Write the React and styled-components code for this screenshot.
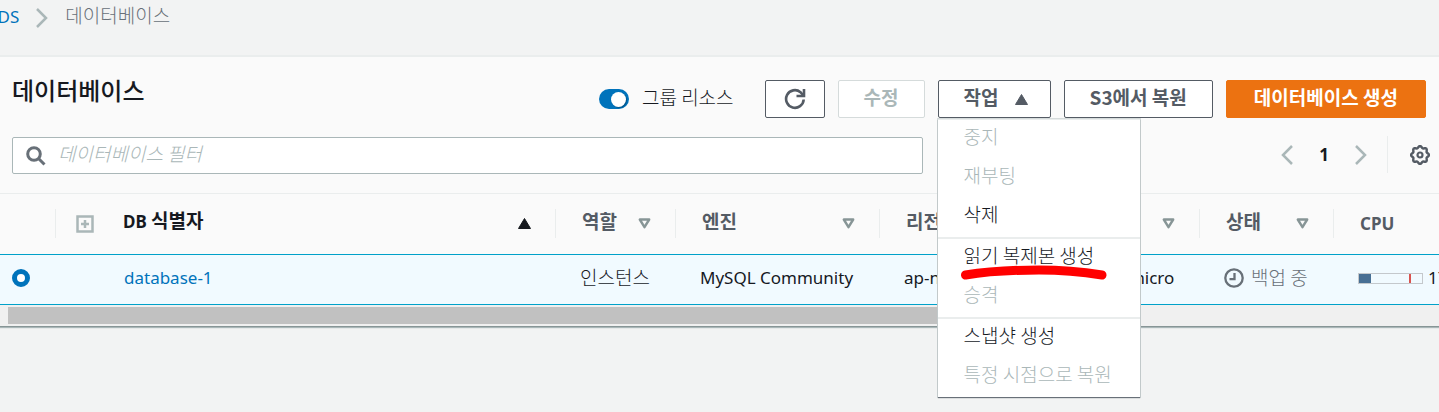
import React from "react";
import styled, { createGlobalStyle, css } from "styled-components";

const latin = '"Noto Sans", "Noto Sans CJK KR", sans-serif';
const korean = '"Noto Sans CJK KR", "Noto Sans", sans-serif';

const GlobalStyle = createGlobalStyle`
  *, *::before, *::after { box-sizing: border-box; }
  body {
    margin: 0;
    min-height: 100vh;
    background: #f2f3f3;
    color: #16191f;
    font: 300 19px/24px ${korean};
  }
  button, input { font: inherit; color: inherit; }
`;

const Breadcrumbs = styled.nav`
  display: flex;
  align-items: flex-start;
  gap: 16px;
  height: 55px;
  margin-left: -13px;
  padding-top: 4px;
  line-height: 22px;
  color: #687078;
`;

const CrumbLink = styled.a`
  font: 400 17px/26px ${latin};
  color: #0073bb;
  text-decoration: none;
`;

const CrumbArrow = styled.svg`
  margin-top: 4px;
`;

const Panel = styled.main`
  background: #fafafa;
  border-top: 2px solid #eaeded;
  border-bottom: 1px solid #879596;
  box-shadow: 0 1px 1px #aab7b8;
`;

const Toolbar = styled.header`
  padding: 23px 13px 19px 12px;
`;

const TitleRow = styled.div`
  display: flex;
  align-items: center;
  gap: 13px;
`;

const Title = styled.h1`
  flex: 1;
  align-self: flex-start;
  margin: 0;
  font-size: 24px;
  line-height: 20px;
  font-weight: 500;
`;

const SwitchLabel = styled.label`
  display: flex;
  align-items: center;
  gap: 13px;
  margin-right: 18px;
`;

const SwitchInput = styled.input`
  appearance: none;
  display: flex;
  justify-content: flex-end;
  width: 30px;
  height: 20px;
  margin: 0;
  padding: 3px;
  border-radius: 10px;
  background: #0073bb;
  &::after {
    content: "";
    width: 15px;
    height: 15px;
    border-radius: 50%;
    background: #fff;
    box-shadow: 1px 1px 1px #00558b;
  }
`;

const SwitchText = styled.span`
  padding-bottom: 4px;
`;

const variants = {
  normal: css`background: #fff; border-color: #545b64; color: #545b64;`,
  disabled: css`background: #fff; border-color: #d5dbdb; color: #aab7b8;`,
  primary: css`background: #ec7211; border-color: #ec7211; color: #fff;`,
};

const Button = styled.button`
  display: flex;
  align-items: center;
  justify-content: center;
  gap: 16px;
  height: 38px;
  padding: 0 ${(p) => p.$pad ?? 25}px 4px;
  border: 1px solid;
  border-radius: 2px;
  font-weight: 700;
  white-space: nowrap;
  ${(p) => variants[p.$variant || "normal"]}
`;

const RefreshButton = styled(Button)`
  width: 60px;
  padding: 0;
`;

const MenuButton = styled(Button)`
  padding-right: 22px;
`;

const MenuAnchor = styled.div`
  position: relative;
`;

const Caret = styled.svg`
  margin-top: 4px;
`;

const Menu = styled.div`
  position: absolute;
  z-index: 2;
  top: 39px;
  left: 0;
  width: 202px;
  background: #fff;
  border-top: 1px solid #eaeded;
  box-shadow: 0 1px 1px #687078, 0 0 0 1px #d5dbdb;
`;

const MenuGroup = styled.div`
  & + & { border-top: 2px solid #eaeded; }
`;

const MenuItem = styled.button`
  display: block;
  width: 100%;
  height: 39px;
  padding: 0 26px 7px;
  border: 0;
  background: none;
  text-align: left;
  white-space: nowrap;
  color: #16191f;
  &:disabled { color: #aab7b8; }
`;

const Underline = styled.svg`
  position: absolute;
  top: 144px;
  left: 20px;
  pointer-events: none;
`;

const FilterRow = styled.div`
  display: flex;
  align-items: flex-start;
  justify-content: space-between;
  margin-top: 19px;
`;

const SearchBox = styled.div`
  display: flex;
  align-items: center;
  gap: 12px;
  width: 64.4%;
  height: 37px;
  padding: 0 13px;
  background: #fff;
  border: 1px solid #aab7b8;
  border-radius: 2px;
`;

const SearchInput = styled.input`
  flex: 1;
  padding: 0 0 6px;
  border: 0;
  outline: 0;
  background: none;
  &::placeholder { color: #aab7b8; font-style: italic; opacity: 1; }
`;

const Pager = styled.div`
  display: flex;
  align-items: center;
  gap: 20px;
  height: 35px;
`;

const IconButton = styled.button`
  display: flex;
  padding: 0;
  border: 0;
  background: none;
`;

const PageNumber = styled.span`
  width: 22px;
  text-align: center;
  font: 700 17px/24px ${latin};
`;

const Settings = styled.div`
  display: flex;
  align-items: center;
  height: 37px;
  margin-right: -4px;
  padding-left: 22px;
  border-left: 1px solid #eaeded;
`;

const TableArea = styled.div`
  overflow: hidden;
  border-top: 1px solid #eaeded;
`;

const Table = styled.table`
  width: 100%;
  table-layout: fixed;
  border-collapse: separate;
  border-spacing: 0;
`;

const Col = styled.col`
  width: ${(p) => (p.$w ? `${p.$w}px` : "auto")};
`;

const HeadCell = styled.th`
  height: 60px;
  padding: 0 0 1px;
  text-align: left;
  font-weight: 700;
  color: ${(p) => (p.$active ? "#16191f" : "#545b64")};
`;

const HeadInner = styled.div`
  display: flex;
  align-items: center;
  justify-content: space-between;
  height: 29px;
  padding: 0 24px 0 26px;
  border-left: 1px solid #eaeded;
  white-space: nowrap;
`;

const HeadText = styled.span`
  flex: 1;
  padding-bottom: 5px;
`;

const HeadLatin = styled.span`
  font: 700 17px/24px ${latin};
`;

const PlusIcon = styled.svg`
  margin: 0 29px 0 -6px;
`;

const Cell = styled.td`
  height: 51px;
  padding: 0 0 3px 25px;
  background: #f1faff;
  border-top: 1px solid #00a1c9;
  border-bottom: 1px solid #00a1c9;
  white-space: nowrap;
`;

const RadioCell = styled(Cell)`
  padding-left: 12px;
`;

const Radio = styled.input`
  appearance: none;
  display: block;
  width: 18px;
  height: 18px;
  margin: 0;
  border: 5px solid #0073bb;
  border-radius: 50%;
  background: #fff;
`;

const KoreanText = styled.div`
  padding-bottom: 3px;
`;

const LatinText = styled.div`
  font: 400 17px/24px ${latin};
`;

const DbLink = styled.a`
  display: block;
  margin-left: 44px;
  font: 400 17px/24px ${latin};
  color: #0073bb;
  text-decoration: none;
`;

const Status = styled.div`
  display: flex;
  align-items: center;
  gap: 7px;
  color: #687078;
`;

const Usage = styled.div`
  display: flex;
  align-items: center;
  gap: 5px;
`;

const Meter = styled.div`
  display: flex;
  justify-content: space-between;
  flex: none;
  width: 65px;
  height: 11px;
  padding-right: 11px;
  border: 1px solid #c4c8cc;
  &::before { content: ""; width: 12px; background: #486f94; }
  &::after { content: ""; width: 2px; background: #d9534f; }
`;

const ScrollTrack = styled.div`
  height: 21px;
  padding: 2px 8px;
  background: #f0f0f0;
`;

const ScrollThumb = styled.div`
  width: 72%;
  height: 17px;
  background: #c1c1c1;
`;

const Chevron = ({ left }) => (
  <svg width="12" height="20" viewBox="0 0 12 20" fill="none" stroke="#aab7b8" strokeWidth="2.5" aria-hidden="true">
    <path d={left ? "M11 1 2 10l9 9" : "M1 1l9 9-9 9"} />
  </svg>
);

const SortIcon = ({ active }) => (
  <svg width="13" height="11" viewBox="0 0 13 11" aria-hidden="true">
    {active ? (
      <path d="M6.5 0.5 12.5 10.5H.5Z" fill="#16191f" stroke="#16191f" strokeLinejoin="round" />
    ) : (
      <path d="M1.8 1.5h9.4L6.5 9.2Z" fill="none" stroke="#879596" strokeWidth="2.4" strokeLinejoin="round" />
    )}
  </svg>
);

const columns = [
  { label: "역할" },
  { label: "엔진" },
  { label: "리전 및 AZ" },
  { label: "크기" },
  { label: "상태" },
];

const menuGroups = [
  [["중지", true], ["재부팅", true], ["삭제", false]],
  [["읽기 복제본 생성", false], ["승격", true]],
  [["스냅샷 생성", false], ["특정 시점으로 복원", true]],
];

const gearPath = Array.from({ length: 64 }, (_, i) => {
  const a = (i / 64) * Math.PI * 2;
  const r = 8.1 + 0.9 * Math.cos(a * 8);
  return `${i ? "L" : "M"}${(10 + r * Math.cos(a)).toFixed(2)} ${(10 + r * Math.sin(a)).toFixed(2)}`;
}).join("") + "Z";

export default function App() {
  return (
    <>
      <GlobalStyle />
      <Breadcrumbs aria-label="breadcrumb">
        <CrumbLink href="#">RDS</CrumbLink>
        <CrumbArrow width="14" height="20" viewBox="0 0 14 20" fill="none" stroke="#aab7b8" strokeWidth="2.5">
          <path d="M2 1l9 9-9 9" />
        </CrumbArrow>
        <span>데이터베이스</span>
      </Breadcrumbs>
      <Panel>
        <Toolbar>
          <TitleRow>
            <Title>데이터베이스</Title>
            <SwitchLabel>
              <SwitchInput type="checkbox" role="switch" defaultChecked />
              <SwitchText>그룹 리소스</SwitchText>
            </SwitchLabel>
            <RefreshButton aria-label="새로 고침">
              <svg width="22" height="22" viewBox="0 0 22 22" fill="none" stroke="#545b64" strokeWidth="2.6">
                <path d="M19.7 11.5A8.8 8.8 0 1 1 16.5 4.2L19 7" />
                <path d="M20 1v7h-7.5" />
              </svg>
            </RefreshButton>
            <Button $variant="disabled" disabled>수정</Button>
            <MenuAnchor>
              <MenuButton aria-expanded="true">
                작업
                <Caret width="13" height="11" viewBox="0 0 13 11">
                  <path d="M6.5.5l6 10H.5Z" fill="#545b64" stroke="#545b64" strokeLinejoin="round" />
                </Caret>
              </MenuButton>
              <Menu>
                {menuGroups.map((group, i) => (
                  <MenuGroup key={i}>
                    {group.map(([label, disabled]) => (
                      <MenuItem key={label} disabled={disabled}>{label}</MenuItem>
                    ))}
                  </MenuGroup>
                ))}
                <Underline width="152" height="20" viewBox="0 0 152 20" fill="none" stroke="#f00" strokeWidth="9" strokeLinecap="round" strokeLinejoin="round">
                  <path d="M7.500 11C32 7 60 6 81 6S125 8 144 11" />
                </Underline>
              </Menu>
            </MenuAnchor>
            <Button>S3에서 복원</Button>
            <Button $variant="primary" $pad={27}>데이터베이스 생성</Button>
          </TitleRow>
          <FilterRow>
            <SearchBox>
              <svg width="20" height="20" viewBox="0 0 20 20" fill="none" stroke="#687078" strokeWidth="3">
                <circle cx="8" cy="8" r="6.300" />
                <path d="M12.500 12.500l6 6" />
              </svg>
              <SearchInput aria-label="데이터베이스 필터" placeholder="데이터베이스 필터" />
            </SearchBox>
            <Pager>
              <IconButton aria-label="이전"><Chevron left /></IconButton>
              <PageNumber>1</PageNumber>
              <IconButton aria-label="다음"><Chevron /></IconButton>
              <Settings>
                <IconButton aria-label="설정">
                  <svg width="20" height="20" viewBox="0 0 20 20" fill="none" stroke="#545b64">
                    <path d={gearPath} strokeWidth="2.4" />
                    <circle cx="10" cy="10" r="2.500" strokeWidth="2.200" />
                  </svg>
                </IconButton>
              </Settings>
            </Pager>
          </FilterRow>
        </Toolbar>
        <TableArea>
          <Table>
            <colgroup>
              <Col $w={55} />
              <Col />
              <Col $w={120} />
              <Col $w={204} />
              <Col $w={179} />
              <Col $w={141} />
              <Col $w={134} />
              <Col $w={106} />
            </colgroup>
            <thead>
              <tr>
                <HeadCell aria-label="선택" />
                <HeadCell $active>
                  <HeadInner>
                    <PlusIcon width="18" height="18" viewBox="0 0 18 18" fill="none" stroke="#aab7b8">
                      <path d="M1.500 1.500h15v15h-15Z" strokeWidth="2.500" />
                      <path d="M9 5v8M5 9h8" strokeWidth="2.500" />
                    </PlusIcon>
                    <HeadText><HeadLatin>DB</HeadLatin> 식별자</HeadText>
                    <SortIcon active />
                  </HeadInner>
                </HeadCell>
                {columns.map(({ label }) => (
                  <HeadCell key={label}>
                    <HeadInner>
                      <HeadText>{label}</HeadText>
                      <SortIcon />
                    </HeadInner>
                  </HeadCell>
                ))}
                <HeadCell>
                  <HeadInner><HeadLatin>CPU</HeadLatin></HeadInner>
                </HeadCell>
              </tr>
            </thead>
            <tbody>
              <tr>
                <RadioCell><Radio type="radio" name="database" aria-label="database-1" defaultChecked /></RadioCell>
                <Cell><DbLink href="#">database-1</DbLink></Cell>
                <Cell><KoreanText>인스턴스</KoreanText></Cell>
                <Cell><LatinText>MySQL Community</LatinText></Cell>
                <Cell><LatinText>ap-northeast-2a</LatinText></Cell>
                <Cell><LatinText>db.t2.micro</LatinText></Cell>
                <Cell>
                  <Status>
                    <svg width="20" height="20" viewBox="0 0 20 20" fill="none" stroke="#687078" strokeWidth="2.300">
                      <circle cx="10" cy="10" r="8.700" />
                      <path d="M10.500 5v6.200H5.500" />
                    </svg>
                    <KoreanText>백업 중</KoreanText>
                  </Status>
                </Cell>
                <Cell>
                  <Usage>
                    <Meter />
                    <LatinText>17.00%</LatinText>
                  </Usage>
                </Cell>
              </tr>
            </tbody>
          </Table>
        </TableArea>
        <ScrollTrack><ScrollThumb /></ScrollTrack>
      </Panel>
    </>
  );
}
